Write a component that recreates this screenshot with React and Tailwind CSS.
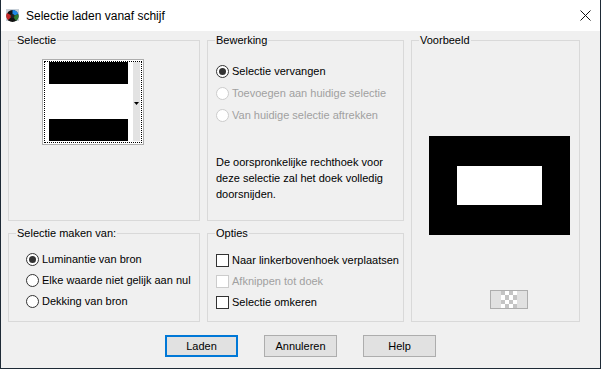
import React from 'react';

const FONT = "font-['Liberation_Sans','Arial',sans-serif]";

function Radio({ checked, disabled, label }) {
  return (
    <div className="flex items-center h-[22px] whitespace-nowrap">
      <span
        className={`w-[13px] h-[13px] rounded-full border bg-white flex items-center justify-center shrink-0 ${
          disabled ? 'border-[#cccccc]' : 'border-[#333333]'
        }`}
      >
        {checked && <span className="w-[7px] h-[7px] rounded-full bg-[#333333]" />}
      </span>
      <span className={`ml-[3px] leading-none ${disabled ? 'text-[#a0a0a0]' : 'text-black'}`}>{label}</span>
    </div>
  );
}

function Check({ disabled, label }) {
  return (
    <div className="flex items-center h-[21px] whitespace-nowrap">
      <span
        className={`w-[13px] h-[13px] border bg-white shrink-0 ${
          disabled ? 'border-[#cccccc]' : 'border-[#333333]'
        }`}
      />
      <span className={`ml-[3px] leading-none ${disabled ? 'text-[#a0a0a0]' : 'text-black'}`}>{label}</span>
    </div>
  );
}

function Group({ title, className = '', children }) {
  return (
    <div className={`relative border border-[#d9d9d9] ${className}`}>
      <span className="absolute left-[7px] -top-[8px] px-[1px] bg-[#f0f0f0] leading-[14px] whitespace-nowrap">{title}</span>
      {children}
    </div>
  );
}

function Button({ children, primary }) {
  return (
    <button
      className={`h-[22px] bg-[#e1e1e1] flex items-center justify-center leading-none ${
        primary ? 'border-2 border-[#0078d7]' : 'border border-[#adadad]'
      } w-[73px]`}
    >
      {children}
    </button>
  );
}

export default function App() {
  return (
    <div className={`w-[601px] h-[369px] bg-[#f0f0f0] border border-t-0 border-[#1e2a36] flex flex-col text-[11px] text-black ${FONT}`}>
      {/* title bar */}
      <div className="h-[31px] bg-white flex items-center pl-[4px] pr-[9px] shrink-0">
        <svg width="15" height="15" viewBox="0 0 15 15" className="shrink-0">
          <rect x="1" y="1" width="13" height="12" fill="#c8d0d8" />
          <circle cx="7.5" cy="8" r="6" fill="#111" />
          <path d="M7.5 8 L7.5 2 A6 6 0 0 1 13.2 6.2 Z" fill="#1e88e5" />
          <path d="M7.5 8 L13.2 6.2 A6 6 0 0 1 11 12.8 Z" fill="#2e7d32" />
          <path d="M7.5 8 L3 12 A6 6 0 0 1 2 5 Z" fill="#c62828" />
          <circle cx="7.5" cy="8" r="2" fill="#222" />
        </svg>
        <span className="ml-[6px] text-[12px]">Selectie laden vanaf schijf</span>
        <svg width="11" height="11" viewBox="0 0 11 11" className="ml-auto">
          <path d="M0.5 0.5 L10.5 10.5 M10.5 0.5 L0.5 10.5" stroke="#111" strokeWidth="1" />
        </svg>
      </div>

      {/* body */}
      <div className="pl-[7px] pt-[9px]">
        <div className="grid grid-cols-[192px_197px_169px] grid-rows-[181px_89px] gap-x-[7px] gap-y-[12px]">
          <Group title="Selectie">
            <div className="ml-[33px] mt-[18px] w-[102px] h-[86px] border border-[#adadad] bg-white p-[1px]">
              <div className="w-full h-full border border-dotted border-black flex pl-[4px]">
                <div className="flex flex-col w-[79px]">
                  <div className="h-[22px] bg-black" />
                  <div className="h-[35px] bg-white" />
                  <div className="h-[22px] bg-black" />
                </div>
                <div className="ml-[5px] w-[7px] h-[79px] bg-[#e3e3e3] flex items-center justify-center">
                  <svg width="5" height="4" viewBox="0 0 5 4" className="mt-[4px]">
                    <path d="M0 0 H5 L2.5 3 Z" fill="#000" />
                  </svg>
                </div>
              </div>
            </div>
          </Group>

          <Group title="Bewerking">
            <div className="pl-[8px] pt-[19px]">
              <Radio checked label="Selectie vervangen" />
              <Radio disabled label="Toevoegen aan huidige selectie" />
              <Radio disabled label="Van huidige selectie aftrekken" />
              <p className="mt-[28px] leading-[16px]">
                De oorspronkelijke rechthoek voor
                <br />
                deze selectie zal het doek volledig
                <br />
                doorsnijden.
              </p>
            </div>
          </Group>

          <Group title="Voorbeeld" className="row-span-2">
            <div className="flex flex-col">
              <div className="ml-[17px] mt-[95px] w-[141px] h-[99px] bg-black pl-[28px] pt-[30px]">
                <div className="w-[85px] h-[39px] bg-white" />
              </div>
              <div className="ml-[78px] mt-[55px] w-[38px] h-[19px] bg-[#e1e1e1] border border-[#adadad] flex justify-center">
                <div className="grid grid-cols-4 w-[16px] h-[17px]">
                  {Array.from({ length: 16 }).map((_, i) => (
                    <div
                      key={i}
                      className={(Math.floor(i / 4) + (i % 4)) % 2 === 0 ? 'bg-[#c4c4c4]' : 'bg-white'}
                    />
                  ))}
                </div>
              </div>
            </div>
          </Group>

          <Group title="Selectie maken van:">
            <div className="pl-[17px] pt-[15px] [&>div]:h-[21px]">
              <Radio checked label="Luminantie van bron" />
              <Radio label="Elke waarde niet gelijk aan nul" />
              <Radio label="Dekking van bron" />
            </div>
          </Group>

          <Group title="Opties">
            <div className="pl-[8px] pt-[16px]">
              <Check label="Naar linkerbovenhoek verplaatsen" />
              <Check disabled label="Afknippen tot doek" />
              <Check label="Selectie omkeren" />
            </div>
          </Group>
        </div>

        <div className="flex mt-[13px] pl-[157px] gap-x-[26px]">
          <Button primary>Laden</Button>
          <Button>Annuleren</Button>
          <Button>Help</Button>
        </div>
      </div>
    </div>
  );
}
